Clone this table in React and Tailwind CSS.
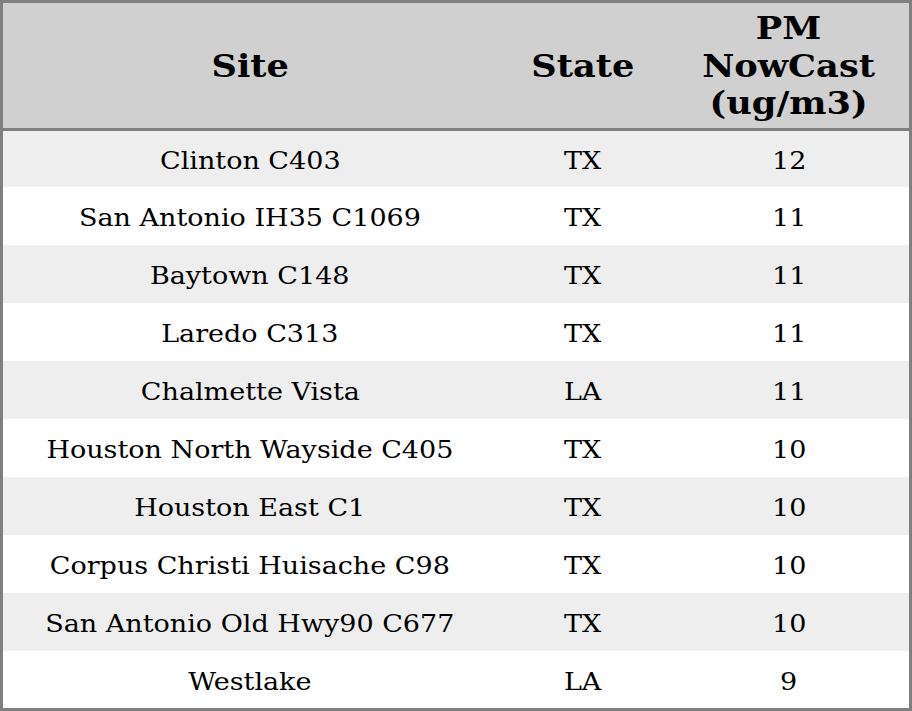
const rows = [
  ["Clinton C403", "TX", "12"],
  ["San Antonio IH35 C1069", "TX", "11"],
  ["Baytown C148", "TX", "11"],
  ["Laredo C313", "TX", "11"],
  ["Chalmette Vista", "LA", "11"],
  ["Houston North Wayside C405", "TX", "10"],
  ["Houston East C1", "TX", "10"],
  ["Corpus Christi Huisache C98", "TX", "10"],
  ["San Antonio Old Hwy90 C677", "TX", "10"],
  ["Westlake", "LA", "9"],
];

const heights = ["h-[56px]", "h-[58px]", "h-[58px]", "h-[58px]", "h-[58px]", "h-[58px]", "h-[58px]", "h-[58px]", "h-[58px]", "h-[57px]"];

function Cell({ children }) {
  return (
    <div className="flex justify-center">
      <span className="inline-block scale-x-[1.125] whitespace-nowrap">{children}</span>
    </div>
  );
}

function HeadCell({ children }) {
  return (
    <div className="flex justify-center">
      <span className="inline-block scale-x-[1.1] whitespace-nowrap">{children}</span>
    </div>
  );
}

export default function App() {
  return (
    <div className="w-[912px] h-[711px] bg-white border-[3px] border-[#808080] flex flex-col text-black font-['DejaVu_Serif',serif]">
      <div className="h-[128px] shrink-0 bg-[#d0d0d0] border-b-[3px] border-[#808080] grid grid-cols-[494px_172px_1fr] items-center text-center font-bold text-[32px] leading-[1.17] pt-[2px]">
        <HeadCell>Site</HeadCell>
        <HeadCell>State</HeadCell>
        <HeadCell>PM<br />NowCast<br />(ug/m3)</HeadCell>
      </div>
      {rows.map((r, i) => (
        <div
          key={i}
          className={`${heights[i]} shrink-0 grid grid-cols-[494px_172px_1fr] items-center text-center text-[24px] pt-[4px] ${i % 2 === 0 ? "bg-[#eeeeee]" : "bg-white"}`}
        >
          <Cell>{r[0]}</Cell>
          <Cell>{r[1]}</Cell>
          <Cell>{r[2]}</Cell>
        </div>
      ))}
    </div>
  );
}
